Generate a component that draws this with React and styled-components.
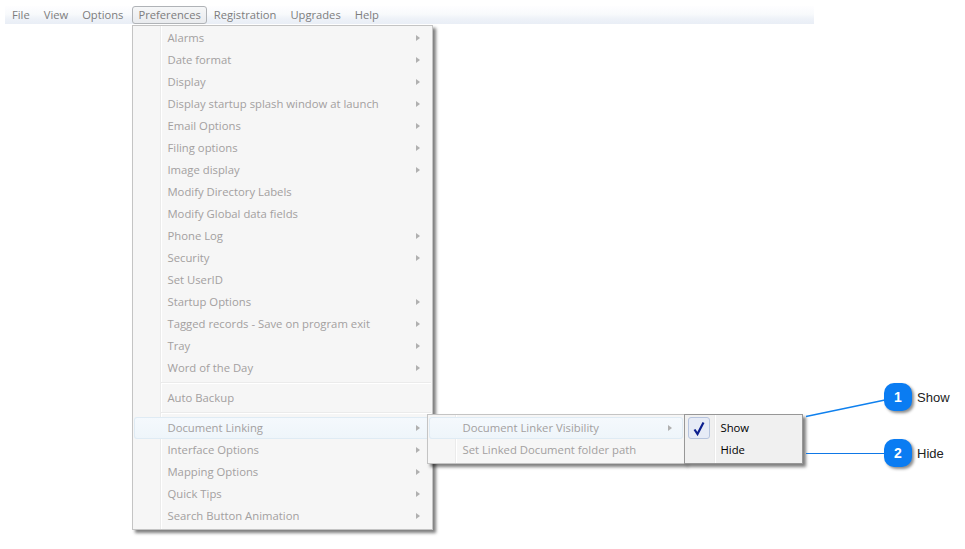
import React from "react";
import styled, { createGlobalStyle } from "styled-components";

const GlobalStyle = createGlobalStyle`
  html, body {
    margin: 0;
    padding: 0;
    background: #fff;
  }
  body {
    width: 965px;
    height: 549px;
    overflow: hidden;
    position: relative;
    font-family: "Open Sans", "Noto Sans", sans-serif;
  }
`;

const Page = styled.div`
  padding: 6px 0 0 5px;
`;

const MenuBar = styled.div`
  width: 809px;
  height: 18px;
  display: flex;
  align-items: center;
  box-sizing: border-box;
  background: linear-gradient(#fefeff 0%, #f8fafc 45%, #eef2f8 70%, #e9eef6 100%);
`;

const BarItem = styled.div`
  position: relative;
  height: 18px;
  line-height: 18px;
  padding: 0 7px;
  font-size: 11.2px;
  color: #7d7d7d;
  white-space: nowrap;
  box-sizing: border-box;
  ${(p) =>
    p.$open &&
    `
    margin-left: 2px;
    padding: 0 5px;
    line-height: 16px;
    border: 1px solid #b0b3b7;
    border-radius: 3px;
    background: linear-gradient(#f6f7f8, #e9ebee);
  `}
`;

const Menu = styled.div`
  position: absolute;
  top: ${(p) => p.$top}px;
  left: ${(p) => p.$left};
  width: ${(p) => p.$width}px;
  padding: ${(p) => p.$padding};
  margin-left: ${(p) => p.$shift || 0}px;
  box-sizing: border-box;
  background:
    linear-gradient(#ebebeb, #ebebeb) no-repeat ${(p) => p.$gutter}px 0 / 1px 100%,
    linear-gradient(#fff, #fff) no-repeat ${(p) => p.$gutter + 1}px 0 / 1px 100%,
    ${(p) => (p.$front ? "#f0f0f0" : "#f6f6f6")};
  border: 1px solid ${(p) => (p.$front ? "#979797" : "#c4c4c4")};
  box-shadow: 3px 3px 3px rgba(0, 0, 0, 0.5);
  z-index: ${(p) => (p.$front ? 3 : 1)};
`;

const Row = styled.div`
  position: relative;
  display: flex;
  align-items: center;
  height: 22px;
  margin: 0 1px;
  font-size: 11.3px;
  white-space: nowrap;
  color: ${(p) => (p.$enabled ? "#000" : "#a3a0a0")};
  box-sizing: border-box;
  ${(p) =>
    p.$active &&
    `
    background: linear-gradient(#f5f9fd, #eef5fa);
    box-shadow: inset 0 0 0 1px #dfebf4;
    border-radius: 3px;
  `}
`;

const IconSlot = styled.span`
  flex: none;
  width: ${(p) => p.$width}px;
  display: flex;
  align-items: center;
`;

const Label = styled.span`
  flex: 1;
`;

const Arrow = styled.i`
  flex: none;
  margin-right: 11px;
  width: 0;
  height: 0;
  border-left: 4px solid #b0b0b0;
  border-top: 3.5px solid transparent;
  border-bottom: 3.5px solid transparent;
`;

const Separator = styled.div`
  height: 8px;
  margin-left: 28px;
  position: relative;
  &::after {
    content: "";
    position: absolute;
    left: 0;
    right: 1px;
    top: 3px;
    height: 2px;
    background: linear-gradient(#ebebeb 50%, #fff 50%);
  }
`;

const CheckBox = styled.span`
  margin-left: 2px;
  width: 22px;
  height: 22px;
  box-sizing: border-box;
  border: 1px solid #b6c4de;
  border-radius: 3px;
  background: #e6ebf6;
  display: flex;
  align-items: center;
  justify-content: center;
`;

const Lines = styled.svg`
  position: absolute;
  inset: 0;
  z-index: 4;
`;

const CalloutColumn = styled.div`
  position: absolute;
  left: 884px;
  top: 383px;
  display: flex;
  flex-direction: column;
  gap: 28px;
  z-index: 5;
`;

const Callout = styled.div`
  display: flex;
  align-items: center;
  gap: 5px;
`;

const Badge = styled.span`
  width: 28px;
  height: 28px;
  border-radius: 10px;
  background: #0a7cf2;
  color: #fff;
  font: bold 14px "Liberation Sans", Arial, sans-serif;
  display: flex;
  align-items: center;
  justify-content: center;
  box-shadow: 2px 2px 3px rgba(0, 0, 0, 0.45);
`;

const CalloutLabel = styled.span`
  font: 13px "Liberation Sans", Arial, sans-serif;
  color: #222;
`;

const topItems = [
  ["Alarms", 1],
  ["Date format", 1],
  ["Display", 1],
  ["Display startup splash window at launch", 1],
  ["Email Options", 1],
  ["Filing options", 1],
  ["Image display", 1],
  ["Modify Directory Labels", 0],
  ["Modify Global data fields", 0],
  ["Phone Log", 1],
  ["Security", 1],
  ["Set UserID", 0],
  ["Startup Options", 1],
  ["Tagged records - Save on program exit", 1],
  ["Tray", 1],
  ["Word of the Day", 1],
];

const bottomItems = ["Interface Options", "Mapping Options", "Quick Tips", "Search Button Animation"];

function VisibilityMenu() {
  return (
    <Menu $front $top={-1} $left="100%" $width={119} $padding="2px 0" $gutter={29}>
      <Row $enabled>
        <IconSlot $width={34}>
          <CheckBox>
            <svg width="14" height="15" viewBox="0 0 14 15">
              <path d="M2.5 8.5 L5.5 13 L11.5 1.5" fill="none" stroke="#0c1f8f" strokeWidth="2.2" />
            </svg>
          </CheckBox>
        </IconSlot>
        <Label>Show</Label>
      </Row>
      <Row $enabled>
        <IconSlot $width={34} />
        <Label>Hide</Label>
      </Row>
    </Menu>
  );
}

function LinkerMenu() {
  return (
    <Menu $top={-3} $left="100%" $width={258} $shift={-4} $padding="2px 0" $gutter={27}>
      <Row $active>
        <IconSlot $width={33} />
        <Label>Document Linker Visibility</Label>
        <Arrow />
      </Row>
      <Row>
        <IconSlot $width={33} />
        <Label>Set Linked Document folder path</Label>
      </Row>
      <VisibilityMenu />
    </Menu>
  );
}

function PreferencesMenu() {
  return (
    <Menu $top={18} $left="-1px" $width={301} $padding="1px 0 2px" $gutter={27}>
      {topItems.map(([label, sub]) => (
        <Row key={label}>
          <IconSlot $width={33} />
          <Label>{label}</Label>
          {sub ? <Arrow /> : null}
        </Row>
      ))}
      <Separator />
      <Row>
        <IconSlot $width={33} />
        <Label>Auto Backup</Label>
      </Row>
      <Separator />
      <Row $active>
        <IconSlot $width={33} />
        <Label>Document Linking</Label>
        <Arrow />
        <LinkerMenu />
      </Row>
      {bottomItems.map((label) => (
        <Row key={label}>
          <IconSlot $width={33} />
          <Label>{label}</Label>
          <Arrow />
        </Row>
      ))}
    </Menu>
  );
}

export default function App() {
  return (
    <Page>
      <GlobalStyle />
      <MenuBar>
        <BarItem>File</BarItem>
        <BarItem>View</BarItem>
        <BarItem>Options</BarItem>
        <BarItem $open>
          Preferences
          <PreferencesMenu />
        </BarItem>
        <BarItem>Registration</BarItem>
        <BarItem>Upgrades</BarItem>
        <BarItem>Help</BarItem>
      </MenuBar>
      <Lines width="965" height="549">
        <line x1="806" y1="416.5" x2="885" y2="400" stroke="#0f80ee" strokeWidth="1.3" />
        <line x1="806" y1="453.5" x2="885" y2="453.5" stroke="#0f78e6" strokeWidth="1" />
      </Lines>
      <CalloutColumn>
        <Callout>
          <Badge>1</Badge>
          <CalloutLabel>Show</CalloutLabel>
        </Callout>
        <Callout>
          <Badge>2</Badge>
          <CalloutLabel>Hide</CalloutLabel>
        </Callout>
      </CalloutColumn>
    </Page>
  );
}
